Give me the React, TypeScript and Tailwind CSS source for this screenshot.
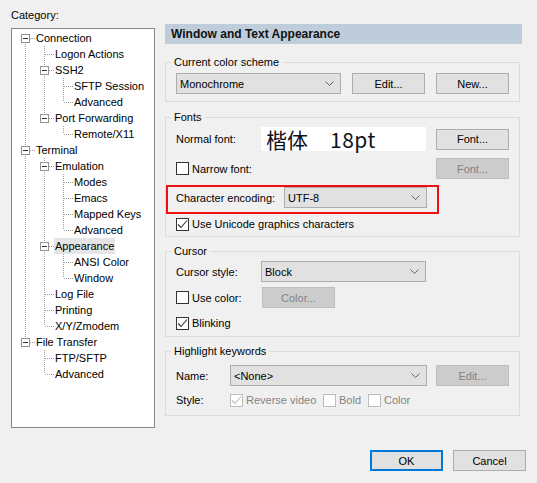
import React from 'react';

type TreeNode = { label: string; selected?: boolean; children?: TreeNode[] };

const tree: TreeNode[] = [
  {
    label: 'Connection',
    children: [
      { label: 'Logon Actions' },
      { label: 'SSH2', children: [{ label: 'SFTP Session' }, { label: 'Advanced' }] },
      { label: 'Port Forwarding', children: [{ label: 'Remote/X11' }] },
    ],
  },
  {
    label: 'Terminal',
    children: [
      {
        label: 'Emulation',
        children: [{ label: 'Modes' }, { label: 'Emacs' }, { label: 'Mapped Keys' }, { label: 'Advanced' }],
      },
      { label: 'Appearance', selected: true, children: [{ label: 'ANSI Color' }, { label: 'Window' }] },
      { label: 'Log File' },
      { label: 'Printing' },
      { label: 'X/Y/Zmodem' },
    ],
  },
  { label: 'File Transfer', children: [{ label: 'FTP/SFTP' }, { label: 'Advanced' }] },
];

type Row = {
  label: string;
  guides: boolean[];
  first: boolean;
  last: boolean;
  open: boolean;
  selected?: boolean;
};

function flatten(nodes: TreeNode[], depth = 0, guides: boolean[] = []): Row[] {
  const rows: Row[] = [];
  nodes.forEach((n, i) => {
    const last = i === nodes.length - 1;
    rows.push({ label: n.label, guides, first: depth === 0 && i === 0, last, open: !!n.children, selected: n.selected });
    if (n.children) rows.push(...flatten(n.children, depth + 1, [...guides, !last]));
  });
  return rows;
}

const DOT = '#a0a0a0';

// tree connector drawings, one 19x16 cell per level
const Guide = ({ line }: { line: boolean }) => (
  <svg width="19" height="16" className="shrink-0">
    {line && <line x1="9.5" y1="0" x2="9.5" y2="16" stroke={DOT} strokeDasharray="1 1" />}
  </svg>
);

const Joint = ({ first, last, open }: { first: boolean; last: boolean; open: boolean }) => (
  <svg width="19" height="16" className="shrink-0">
    <line x1="9.5" y1={first ? 8 : 0} x2="9.5" y2={last ? 8 : 16} stroke={DOT} strokeDasharray="1 1" />
    <line x1="10" y1="8.5" x2="19" y2="8.5" stroke={DOT} strokeDasharray="1 1" />
    {open && (
      <>
        <rect x="5.5" y="4.5" width="8" height="8" fill="#ffffff" stroke="#919191" />
        <line x1="7" y1="8.5" x2="12" y2="8.5" stroke="#333333" />
      </>
    )}
  </svg>
);

const CategoryTree = () => {
  const rows = flatten(tree);
  return (
    <div className="pl-[11px] pt-[7px] w-[155px] shrink-0">
      <div className="h-4">Category:</div>
      <div className="mt-[5px] w-[144px] h-[400px] bg-white border border-[#828790] pt-[1px] pl-[4px]">
        {rows.map((r, i) => (
          <div key={i} className="flex h-4 items-center">
            {r.guides.map((g, k) => (
              <Guide key={k} line={g} />
            ))}
            <Joint first={r.first} last={r.last} open={r.open} />
            <span className={`px-[1px] h-4 leading-4 whitespace-nowrap ${r.selected ? 'bg-[#e5e5e5]' : ''}`}>{r.label}</span>
          </div>
        ))}
      </div>
    </div>
  );
};

const Chevron = () => (
  <svg width="9" height="5" viewBox="0 0 9 5" className="shrink-0">
    <polyline points="0.5,0.5 4.5,4.5 8.5,0.5" fill="none" stroke="#555555" strokeWidth="0.9" />
  </svg>
);

const Combo = ({ value, className }: { value: string; className: string }) => (
  <div className={`h-[21px] bg-[#e1e1e1] border border-[#adadad] flex items-center justify-between pl-[3px] pr-[6px] ${className}`}>
    <span>{value}</span>
    <Chevron />
  </div>
);

const Button = ({ label, disabled, primary, className = '' }: { label: string; disabled?: boolean; primary?: boolean; className?: string }) => {
  const tone = disabled
    ? 'bg-[#cccccc] border border-[#bfbfbf] text-[#838383]'
    : primary
    ? 'bg-[#e1e1e1] border-2 border-[#0078d7]'
    : 'bg-[#e1e1e1] border border-[#adadad]';
  return <div className={`w-[73px] h-[21px] shrink-0 flex items-center justify-center ${tone} ${className}`}>{label}</div>;
};

const Check = ({ checked, disabled }: { checked?: boolean; disabled?: boolean }) => (
  <span
    className={`w-[13px] h-[13px] shrink-0 flex items-center justify-center border ${
      disabled ? 'border-[#bcbcbc] bg-white' : 'border-[#333333] bg-white'
    }`}
  >
    {checked && (
      <svg width="11" height="11" viewBox="0 0 11 11">
        <polyline
          points="1,5.5 4,8.5 10,1.5"
          fill="none"
          stroke={disabled ? '#bcbcbc' : '#333333'}
          strokeWidth="1.1"
        />
      </svg>
    )}
  </span>
);

const CheckLabel = ({ label, checked, disabled, className = '' }: { label: string; checked?: boolean; disabled?: boolean; className?: string }) => (
  <div className={`flex items-center h-4 ${className}`}>
    <Check checked={checked} disabled={disabled} />
    <span className={`ml-[3px] whitespace-nowrap ${disabled ? 'text-[#838383]' : ''}`}>{label}</span>
  </div>
);

const Group = ({ title, className, children }: { title: string; className: string; children: React.ReactNode }) => (
  <fieldset className={`w-[355px] border border-[#dcdcdc] ${className}`}>
    <legend className="ml-[5px] px-[3px] leading-4">{title}</legend>
    {children}
  </fieldset>
);

export default function App() {
  return (
    <div className="w-[537px] h-[483px] overflow-hidden bg-[#f0f0f0] text-black text-[11px] leading-4 font-['Liberation_Sans',Arial,sans-serif]">
      <div className="flex h-[428px]">
        <CategoryTree />

        <div className="ml-[10px] w-[357px] pt-[24px]">
          <div className="h-[20px] bg-[#bfcddb] pl-[6px] text-[12px] leading-[20px] font-bold text-[#111111]">
            Window and Text Appearance
          </div>

          <Group title="Current color scheme" className="mt-[10px]">
            <div className="flex items-center pl-[10px] mt-[3px] pb-[7px]">
              <Combo value="Monochrome" className="w-[165px]" />
              <Button label="Edit..." className="ml-[11px]" />
              <Button label="New..." className="ml-[11px]" />
            </div>
          </Group>

          <Group title="Fonts" className="mt-[7px]">
            <div className="flex items-center h-[24px] mt-[2px] pl-[10px]">
              <span className="w-[85px]">Normal font:</span>
              <div className="w-[165px] h-[24px] bg-white flex items-center pl-[5px] text-[21px] leading-[24px] text-[#111122] font-['Noto_Sans_CJK_SC',sans-serif] whitespace-pre">
                <span>楷体</span>
                <span className="ml-[22px] tracking-[0.5px]">18pt</span>
              </div>
              <Button label="Font..." className="ml-[10px]" />
            </div>
            <div className="flex items-center h-[21px] mt-[7px] pl-[10px]">
              <CheckLabel label="Narrow font:" className="w-[260px]" />
              <Button label="Font..." disabled />
            </div>
            <div className="w-[273px] h-[29px] mt-[6px] border-2 border-[#ee1111] flex items-start pl-[8px]">
              <span className="w-[108px] leading-[22px]">Character encoding:</span>
              <Combo value="UTF-8" className="w-[143px]" />
            </div>
            <div className="pl-[10px] mt-[2px] pb-[4px]">
              <CheckLabel label="Use Unicode graphics characters" checked />
            </div>
          </Group>

          <Group title="Cursor" className="mt-[6px]">
            <div className="flex items-center mt-[2px] pl-[10px]">
              <span className="w-[85px]">Cursor style:</span>
              <Combo value="Block" className="w-[165px]" />
            </div>
            <div className="flex items-center h-[21px] mt-[5px] pl-[10px]">
              <CheckLabel label="Use color:" className="w-[86px]" />
              <Button label="Color..." disabled />
            </div>
            <div className="pl-[10px] mt-[7px] pb-[5px]">
              <CheckLabel label="Blinking" checked />
            </div>
          </Group>

          <Group title="Highlight keywords" className="mt-[6px]">
            <div className="flex items-center mt-[6px] pl-[10px]">
              <span className="w-[54px]">Name:</span>
              <Combo value="<None>" className="w-[197px]" />
              <Button label="Edit..." disabled className="ml-[9px]" />
            </div>
            <div className="flex items-center h-4 mt-[6px] pl-[10px] pb-[7px] box-content">
              <span className="w-[54px]">Style:</span>
              <CheckLabel label="Reverse video" checked disabled className="w-[93px]" />
              <CheckLabel label="Bold" disabled className="w-[45px]" />
              <CheckLabel label="Color" disabled />
            </div>
          </Group>
        </div>
      </div>

      <div className="flex justify-end gap-[10px] pr-[11px] mt-[22px]">
        <Button label="OK" primary />
        <Button label="Cancel" />
      </div>
    </div>
  );
}
